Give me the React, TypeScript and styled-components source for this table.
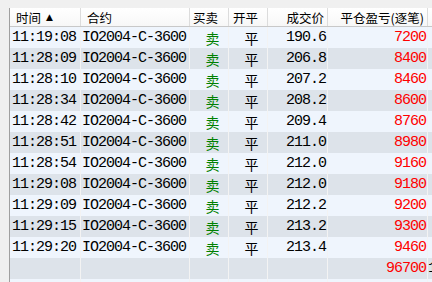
import React from 'react';
import styled, { createGlobalStyle } from 'styled-components';

interface Trade {
  time: string;
  contract: string;
  side: string;
  offset: string;
  price: string;
  pnl: string;
}

const trades: Trade[] = [
  { time: '11:19:08', contract: 'IO2004-C-3600', side: '卖', offset: '平', price: '190.6', pnl: '7200' },
  { time: '11:28:09', contract: 'IO2004-C-3600', side: '卖', offset: '平', price: '206.8', pnl: '8400' },
  { time: '11:28:10', contract: 'IO2004-C-3600', side: '卖', offset: '平', price: '207.2', pnl: '8460' },
  { time: '11:28:34', contract: 'IO2004-C-3600', side: '卖', offset: '平', price: '208.2', pnl: '8600' },
  { time: '11:28:42', contract: 'IO2004-C-3600', side: '卖', offset: '平', price: '209.4', pnl: '8760' },
  { time: '11:28:51', contract: 'IO2004-C-3600', side: '卖', offset: '平', price: '211.0', pnl: '8980' },
  { time: '11:28:54', contract: 'IO2004-C-3600', side: '卖', offset: '平', price: '212.0', pnl: '9160' },
  { time: '11:29:08', contract: 'IO2004-C-3600', side: '卖', offset: '平', price: '212.0', pnl: '9180' },
  { time: '11:29:09', contract: 'IO2004-C-3600', side: '卖', offset: '平', price: '212.2', pnl: '9200' },
  { time: '11:29:15', contract: 'IO2004-C-3600', side: '卖', offset: '平', price: '213.2', pnl: '9300' },
  { time: '11:29:20', contract: 'IO2004-C-3600', side: '卖', offset: '平', price: '213.4', pnl: '9460' },
];

const App: React.FC = () => {
  return (
    <>
      <GlobalStyle />
      <Window>
        <Table>
          <HeaderRow>
            <HeadCell>时间 <Arrow>▲</Arrow></HeadCell>
            <HeadCell>合约</HeadCell>
            <HeadCell $pad={3}>买卖</HeadCell>
            <HeadCell $pad={4}>开平</HeadCell>
            <HeadCell $right>成交价</HeadCell>
            <HeadCell $right>平仓盈亏(逐笔)</HeadCell>
            <HeadCell />
          </HeaderRow>

          {trades.map((t, i) => (
            <Row key={i} $alt={i % 2 === 1}>
              <Cell $pad={2}>{t.time}</Cell>
              <Cell $pad={1}>{t.contract}</Cell>
              <CjkCell $color="#008000">{t.side}</CjkCell>
              <CjkCell>{t.offset}</CjkCell>
              <Cell $right>{t.price}</Cell>
              <Cell $right $color="#ff0000">{t.pnl}</Cell>
              <Cell />
            </Row>
          ))}

          <Row $alt>
            <Cell />
            <Cell />
            <Cell />
            <Cell />
            <Cell />
            <Cell $right $color="#ff0000">96700</Cell>
            <Cell $pad={0}>1</Cell>
          </Row>
          <Row $alt={false}>
            <Cell />
            <Cell />
            <Cell />
            <Cell />
            <Cell />
            <Cell />
            <Cell />
          </Row>
        </Table>
      </Window>
    </>
  );
};

export default App;

const GlobalStyle = createGlobalStyle`
  html, body {
    margin: 0;
    padding: 0;
    overflow: hidden;
    background: #f0f0f0;
  }
`;

const Window = styled.div`
  width: 432px;
  height: 282px;
  overflow: hidden;
  background: #f0f0f0;
  padding: 8px 0 0 9px;
  box-sizing: border-box;
`;

const Table = styled.div`
  display: flex;
  flex-direction: column;
  width: 520px;
  border-left: 1px solid #a0a0a0;
`;

const columns = '71px 109px 39px 39px 60px 100px 101px';

const HeaderRow = styled.div`
  display: grid;
  grid-template-columns: ${columns};
  height: 19px;
  box-sizing: border-box;
  background: linear-gradient(#ffffff, #f7f7f7);
  border-bottom: 1px solid #c8c8c8;
`;

const HeadCell = styled.div<{ $right?: boolean; $pad?: number }>`
  display: flex;
  align-items: center;
  justify-content: ${(p) => (p.$right ? 'flex-end' : 'flex-start')};
  padding: 0 ${(p) => (p.$right ? 3 : 0)}px 0 ${(p) => (p.$pad ?? 6)}px;
  border-right: 1px solid #dcdcdc;
  box-sizing: border-box;
  font-family: 'Noto Sans CJK SC', 'Noto Sans', sans-serif;
  font-size: 12.5px;
  color: #000;
  white-space: nowrap;
  overflow: hidden;
`;

const Arrow = styled.span`
  font-size: 9px;
  margin-left: 5px;
  font-family: 'DejaVu Sans', sans-serif;
`;

const Row = styled.div<{ $alt: boolean }>`
  display: grid;
  grid-template-columns: ${columns};
  height: 21px;
  background: ${(p) => (p.$alt ? '#dde3ea' : '#eff5fd')};
`;

const Cell = styled.div<{ $right?: boolean; $pad?: number; $color?: string }>`
  display: flex;
  align-items: center;
  justify-content: ${(p) => (p.$right ? 'flex-end' : 'flex-start')};
  padding: 0 ${(p) => (p.$right ? 1 : 0)}px 0 ${(p) => (p.$pad ?? 0)}px;
  border-right: 1px solid #f3f3f3;
  box-sizing: border-box;
  font-family: 'Liberation Mono', monospace;
  font-size: 15px;
  letter-spacing: -1px;
  color: ${(p) => p.$color ?? '#000'};
  white-space: nowrap;
  overflow: hidden;
`;

const CjkCell = styled.div<{ $color?: string }>`
  display: flex;
  align-items: center;
  justify-content: center;
  padding-left: 7px;
  border-right: 1px solid #f3f3f3;
  box-sizing: border-box;
  font-family: 'Noto Sans CJK SC', sans-serif;
  font-size: 14px;
  color: ${(p) => p.$color ?? '#000'};
`;
